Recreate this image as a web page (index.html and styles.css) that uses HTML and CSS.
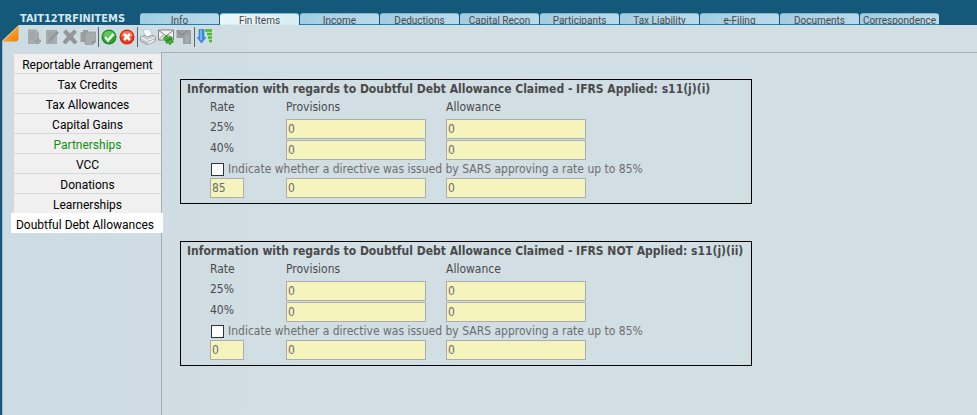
FILE: index.html
```
<!DOCTYPE html>
<html lang="en">
<head>
  <meta charset="UTF-8" />
  <meta name="viewport" content="width=device-width, initial-scale=1.0"/>
  <title>TAIT12TRFINITEMS</title>
  <link rel="stylesheet" href="styles.css">
</head>
<body>

<header>
  <h1>TAIT12TRFINITEMS</h1>
  <nav class="tabs">
    <a href="#">Info</a>
    <a href="#" class="active">Fin Items</a>
    <a href="#">Income</a>
    <a href="#">Deductions</a>
    <a href="#">Capital Recon</a>
    <a href="#">Participants</a>
    <a href="#">Tax Liability</a>
    <a href="#">e-Filing</a>
    <a href="#">Documents</a>
    <a href="#">Correspondence</a>
  </nav>
</header>

<div class="page">
  <!-- Folded corner -->
  <svg class="fold" width="19" height="18" viewBox="0 0 19 18">
    <defs>
      <linearGradient id="orange" x1="0" y1="0" x2="1" y2="1">
        <stop offset="0.3" stop-color="#ffb040"/>
        <stop offset="1" stop-color="#f07800"/>
      </linearGradient>
    </defs>
    <path d="M0 0H19L2 16V18H0Z" fill="#14587a"/>
    <path d="M18.500 0.500L2.500 16.500H14.500Q18.500 16.500 18.500 13Z" fill="url(#orange)"/>
    <path d="M18.500 0.500L2.500 16" fill="none" stroke="#f6dcb4" stroke-width="0.600"/>
  </svg>

  <div class="toolbar">
    <button disabled aria-label="New">
      <svg viewBox="0 0 16 16"><path d="M2 0.500H10L13 3.500V15H2Z" fill="#a6abad"/><path d="M4 4H9M4 7H10M4 10H8" stroke="#999ea1"/><path d="M12 9V15M9 12H15" stroke="#999ea1" stroke-width="2.500"/></svg>
    </button>
    <button disabled aria-label="Edit">
      <svg viewBox="0 0 16 16"><path d="M2 1H13V15H2Z" fill="#a6abad"/><path d="M4 4H10M4 7H8" stroke="#999ea1"/><path d="M4 13L5 10L13 2L15 4L7 12Z" fill="#92979a"/></svg>
    </button>
    <button disabled aria-label="Delete">
      <svg viewBox="0 0 16 16"><path d="M1 3L4 0.500L8 4.500L12 0.500L15 3L11 7.500L15.500 13L12.500 15.500L8 11L3.500 15.500L0.500 13L5 7.500Z" fill="#92979a"/></svg>
    </button>
    <button disabled aria-label="Copy">
      <svg viewBox="0 0 16 16"><path d="M0.500 3H3V1H8V3H10V13H0.500Z" fill="#999ea1"/><path d="M5 5L8 3H15.500V13L13 15.500H5Z" fill="#a6abad" stroke="#92979a" stroke-width="0.700"/><path d="M15.500 12L12.500 15V12Z" fill="#888d90"/></svg>
    </button>
    <span class="divider"></span>
    <button aria-label="Accept">
      <svg viewBox="0 0 16 16"><circle cx="8" cy="8" r="7.500" fill="#178b1b"/><circle cx="8" cy="8" r="6.500" fill="#27a52d"/><path d="M2 7Q3 2 8 2T14 7Q8 10 2 7Z" fill="#62c65b"/><path d="M4 8L7 11.500L12.500 5" fill="none" stroke="#fff" stroke-width="2.500"/></svg>
    </button>
    <button aria-label="Cancel">
      <svg viewBox="0 0 16 16"><circle cx="8" cy="8" r="7.500" fill="#cf2410"/><circle cx="8" cy="8" r="6.500" fill="#ed3b22"/><path d="M2 7Q3 2 8 2T14 7Q8 10 2 7Z" fill="#f57459"/><path d="M5 5L11 11M11 5L5 11" stroke="#fff" stroke-width="2.800"/></svg>
    </button>
    <span class="divider"></span>
    <button aria-label="Print">
      <svg viewBox="0 0 16 16"><path d="M3 1L9 0L13 7L6 9Z" fill="#f7fbff" stroke="#a9bdd0" stroke-width="0.700"/><path d="M0.500 8L5 6L7 8L12 6L15.500 8V12L7 15.500L0.500 12Z" fill="#c7cbd1" stroke="#858b93" stroke-width="0.700"/><path d="M1 8.500L7 11.500L15 8.500" fill="none" stroke="#fff"/><path d="M7 13L14 10L15.500 12L8 15.500Z" fill="#eef1f4" stroke="#8b9198" stroke-width="0.500"/></svg>
    </button>
    <button aria-label="Send and receive">
      <svg viewBox="0 0 16 16"><path d="M0.500 1H15.500V11H0.500Z" fill="#f1f1ef" stroke="#777" stroke-width="0.900"/><path d="M1 1.500L8 7L15 1.500M1 10.500L6 5.500M15 10.500L10 5.500" fill="none" stroke="#777" stroke-width="0.900"/><path d="M5 9.500L9 6V8H14V10.500H9V12.500Z" fill="#45b62c" stroke="#167c13" stroke-width="0.700"/><path d="M15.500 12.500L11.500 9.500V11.500H8V14H11.500V15.800Z" fill="#45b62c" stroke="#167c13" stroke-width="0.700"/></svg>
    </button>
    <button disabled aria-label="Forward">
      <svg viewBox="0 0 16 16"><path d="M0.500 1H15V15H7V9H0.500Z" fill="#999ea1"/><path d="M1 2L6 6L11 2" fill="none" stroke="#7f8587"/><path d="M9 6H13V14H9Z" fill="#a6abad"/></svg>
    </button>
    <span class="divider"></span>
    <button aria-label="Sort">
      <svg viewBox="0 0 16 16"><path d="M2 0.500H7V8.500H9L4.500 14L0 8.500H2Z" fill="#3c8ee4" stroke="#2e73c4" stroke-width="0.600"/><path d="M4 1V11" stroke="#86c2f8" stroke-width="1.500"/><path d="M8 1.500H15M10 5H15M11 8.500H15M12 12H15" stroke="#45bd24" stroke-width="2.500"/></svg>
    </button>
  </div>

  <div class="layout">
    <nav class="side-menu">
      <a href="#">Reportable Arrangement</a>
      <a href="#">Tax Credits</a>
      <a href="#">Tax Allowances</a>
      <a href="#">Capital Gains</a>
      <a href="#" class="captured">Partnerships</a>
      <a href="#">VCC</a>
      <a href="#">Donations</a>
      <a href="#">Learnerships</a>
      <a href="#" class="active">Doubtful Debt Allowances</a>
    </nav>

    <main>
      <!-- IFRS applied -->
      <section class="allowance-box">
        <h2>Information with regards to Doubtful Debt Allowance Claimed - IFRS Applied: s11(j)(i)</h2>
        <table>
          <tr><th class="rate">Rate</th><th class="amount">Provisions</th><th>Allowance</th></tr>
          <tr>
            <td>25%</td>
            <td><input type="text" value="0" aria-label="Provisions 25%"></td>
            <td><input type="text" value="0" aria-label="Allowance 25%"></td>
          </tr>
          <tr>
            <td>40%</td>
            <td><input type="text" value="0" aria-label="Provisions 40%"></td>
            <td><input type="text" value="0" aria-label="Allowance 40%"></td>
          </tr>
          <tr class="directive">
            <td colspan="3">
              <label><input type="checkbox">Indicate whether a directive was issued by SARS approving a rate up to 85%</label>
            </td>
          </tr>
          <tr>
            <td><input type="text" class="short" value="85" aria-label="Directive rate"></td>
            <td><input type="text" value="0" aria-label="Provisions at directive rate"></td>
            <td><input type="text" value="0" aria-label="Allowance at directive rate"></td>
          </tr>
        </table>
      </section>

      <!-- IFRS not applied -->
      <section class="allowance-box">
        <h2>Information with regards to Doubtful Debt Allowance Claimed - IFRS NOT Applied: s11(j)(ii)</h2>
        <table>
          <tr><th class="rate">Rate</th><th class="amount">Provisions</th><th>Allowance</th></tr>
          <tr>
            <td>25%</td>
            <td><input type="text" value="0" aria-label="Provisions 25%"></td>
            <td><input type="text" value="0" aria-label="Allowance 25%"></td>
          </tr>
          <tr>
            <td>40%</td>
            <td><input type="text" value="0" aria-label="Provisions 40%"></td>
            <td><input type="text" value="0" aria-label="Allowance 40%"></td>
          </tr>
          <tr class="directive">
            <td colspan="3">
              <label><input type="checkbox">Indicate whether a directive was issued by SARS approving a rate up to 85%</label>
            </td>
          </tr>
          <tr>
            <td><input type="text" class="short" value="0" aria-label="Directive rate"></td>
            <td><input type="text" value="0" aria-label="Provisions at directive rate"></td>
            <td><input type="text" value="0" aria-label="Allowance at directive rate"></td>
          </tr>
        </table>
      </section>
    </main>
  </div>
</div>

</body>
</html>
```
FILE: styles.css
```
* {
  box-sizing: border-box;
}

body {
  margin: 0;
  min-height: 100vh;
  display: flex;
  flex-direction: column;
  background: #14587a;
  color: #4a4a4a;
  font-family: Tahoma, "DejaVu Sans Condensed", "DejaVu Sans", sans-serif;
  font-size: 12px;
}

a {
  text-decoration: none;
}

header {
  display: flex;
  align-items: flex-end;
  height: 25px;
  padding-left: 20px;
}

h1 {
  width: 120px;
  margin: 0;
  color: #d3e8f2;
  font-size: 11px;
  line-height: 12px;
  white-space: nowrap;
}

.tabs {
  display: flex;
  gap: 1px;
}

.tabs a {
  width: 79px;
  height: 12px;
  border-radius: 3px 3px 0 0;
  border-top: 1px solid #7db4d0;
  border-bottom: 1px solid #2080b0;
  background: linear-gradient(to right, #a3cde2, #b9dbea);
  color: #4a4a4a;
  font-family: Roboto, sans-serif;
  font-size: 10px;
  line-height: 13px;
  text-align: center;
  white-space: nowrap;
}

.tabs a.active {
  border-bottom-color: #dcedf2;
  background: linear-gradient(to right, #eaf6f9, #d6edf3);
}

.page {
  position: relative;
  flex: 1;
  display: flex;
  flex-direction: column;
  margin-left: 2px;
  border-left: 1px solid #9fbfce;
  background: linear-gradient(to right, #cddce3, #d1dee4 30%, #d1dee4);
}

.fold {
  position: absolute;
  top: 0;
  left: -3px;
}

.toolbar {
  display: flex;
  align-items: center;
  gap: 2px;
  height: 27px;
  padding: 0 0 3px 23px;
}

.toolbar button {
  width: 16px;
  height: 16px;
  padding: 0;
  border: none;
  background: none;
}

.toolbar svg {
  display: block;
  width: 16px;
  height: 16px;
}

.divider {
  width: 1px;
  height: 20px;
  background: #5b6468;
}

.layout {
  flex: 1;
  display: flex;
}

.side-menu {
  width: 158px;
  padding: 2px 0 0 10px;
}

.side-menu a {
  display: block;
  height: 20px;
  border: 1px solid #d8d8d8;
  border-width: 0 0 1px 1px;
  background: #f0f0f0;
  color: #000;
  font-family: "Segoe UI", Roboto, "Open Sans", sans-serif;
  font-size: 12px;
  line-height: 22px;
  text-align: center;
  white-space: nowrap;
}

.side-menu a.captured {
  color: #109010;
}

.side-menu a.active {
  position: relative;
  margin: -1px -2px 0;
  padding-right: 4px;
  border: none;
  background: #fff;
  line-height: 24px;
}

main {
  flex: 1;
  padding: 26px 18px;
  border-top: 1px solid #adadad;
  border-left: 1px solid #adadad;
}

.allowance-box {
  width: 572px;
  margin-bottom: 37px;
  padding: 0 0 4px 6px;
  border: 1px solid #000;
}

.allowance-box:last-child {
  margin-bottom: 0;
}

h2 {
  margin: 0;
  font-size: 12px;
  line-height: 19px;
  white-space: nowrap;
}

table {
  margin-left: 23px;
  border-collapse: collapse;
}

th {
  height: 20px;
  padding: 0;
  font-weight: normal;
  line-height: 16px;
  text-align: left;
  vertical-align: top;
}

td {
  height: 21px;
  padding: 0;
  line-height: 16px;
  vertical-align: top;
}

.rate {
  width: 76px;
}

.amount {
  width: 160px;
}

input[type="text"] {
  display: block;
  width: 140px;
  height: 20px;
  padding: 0 1px;
  border: 1px solid #adadad;
  background: #f5f4bc;
  color: #6d6d6d;
  font: inherit;
}

input.short {
  width: 34px;
}

.directive td {
  height: 17px;
}

.directive label {
  display: flex;
  align-items: center;
  gap: 4px;
  color: #6d6d6d;
}

input[type="checkbox"] {
  appearance: none;
  width: 13px;
  height: 13px;
  margin: 0 0 0 1px;
  border: 1px solid #333;
  background: #fff;
}

input[type="checkbox"]:checked {
  background: #333;
}
```
